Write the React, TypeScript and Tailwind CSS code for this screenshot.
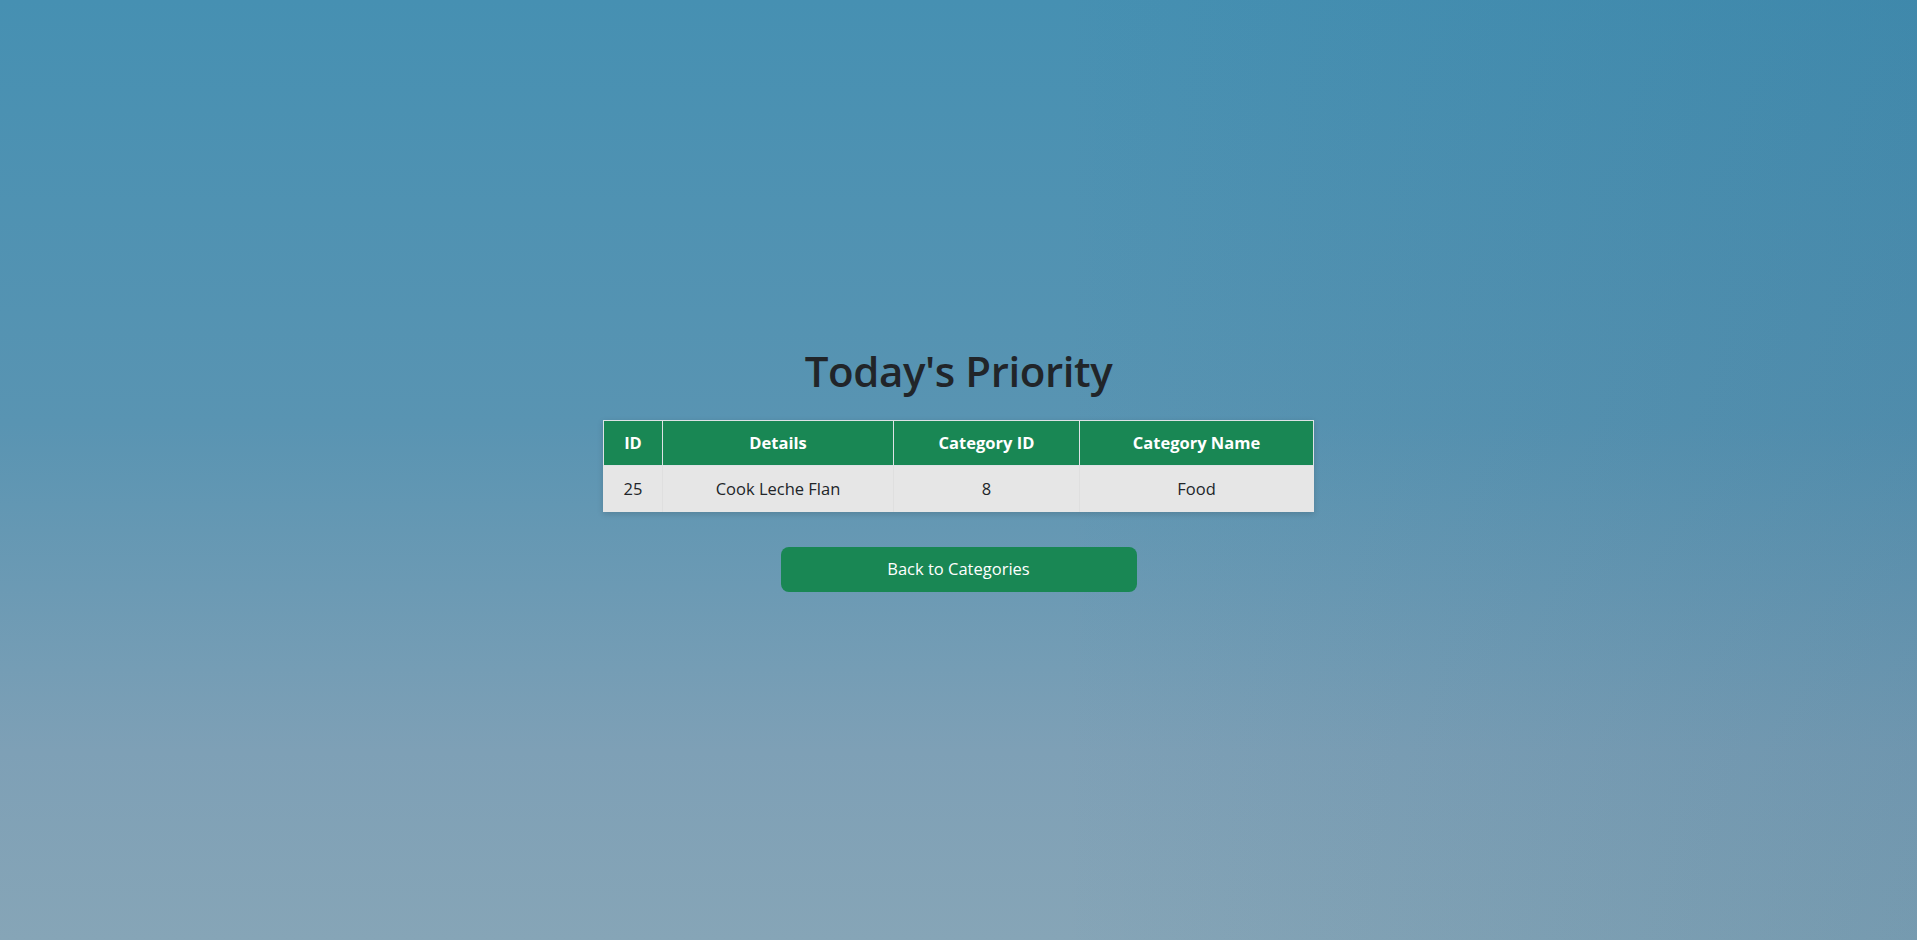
export default function App() {
    const rows = [{ id: 25, details: 'Cook Leche Flan', categoryId: 8, categoryName: 'Food' }];

    return (
        <div
            className="relative h-[940px] w-full overflow-hidden text-[#212529]"
            style={{ fontFamily: '"Open Sans", "Noto Sans", sans-serif' }}
        >
            {/* background wash */}
            <div className="absolute inset-0 bg-[linear-gradient(180deg,#4690b2_0%,#5994b2_45%,#7ea0b6_80%,#86a5b7_100%)]" />
            <div className="absolute inset-0 bg-[linear-gradient(90deg,rgba(255,255,255,0)_0%,rgba(255,255,255,0)_55%,rgba(20,90,130,0.14)_100%)]" />

            <div className="relative flex h-full flex-col items-center justify-center pb-[2px]">
                <h1 className="mb-[24px] text-[42px] font-semibold leading-[1.2] tracking-[-0.4px]">Today's Priority</h1>

                <table className="w-[711px] border-collapse text-center text-[16.5px] shadow-[0_2px_6px_rgba(0,0,0,0.15)]">
                    <thead>
                        <tr className="bg-[#198754] text-white">
                            <th className="h-[45px] w-[59px] border border-[#dee2e6] font-bold">ID</th>
                            <th className="w-[231px] border border-[#dee2e6] font-bold">Details</th>
                            <th className="w-[186px] border border-[#dee2e6] font-bold">Category ID</th>
                            <th className="border border-[#dee2e6] font-bold">Category Name</th>
                        </tr>
                    </thead>
                    <tbody>
                        {rows.map((r) => (
                            <tr key={r.id} className="bg-[#e6e6e6]">
                                <td className="h-[46px] border-x border-[#dfdfdf] first:border-l-[#e6e6e6]">{r.id}</td>
                                <td className="border-x border-[#dfdfdf]">{r.details}</td>
                                <td className="border-x border-[#dfdfdf]">{r.categoryId}</td>
                                <td className="border-x border-[#dfdfdf] last:border-r-[#e6e6e6]">{r.categoryName}</td>
                            </tr>
                        ))}
                    </tbody>
                </table>

                <button className="mt-[35px] h-[45px] w-[356px] rounded-lg bg-[#198754] text-[16.5px] text-white">
                    Back to Categories
                </button>
            </div>
        </div>
    );
}
